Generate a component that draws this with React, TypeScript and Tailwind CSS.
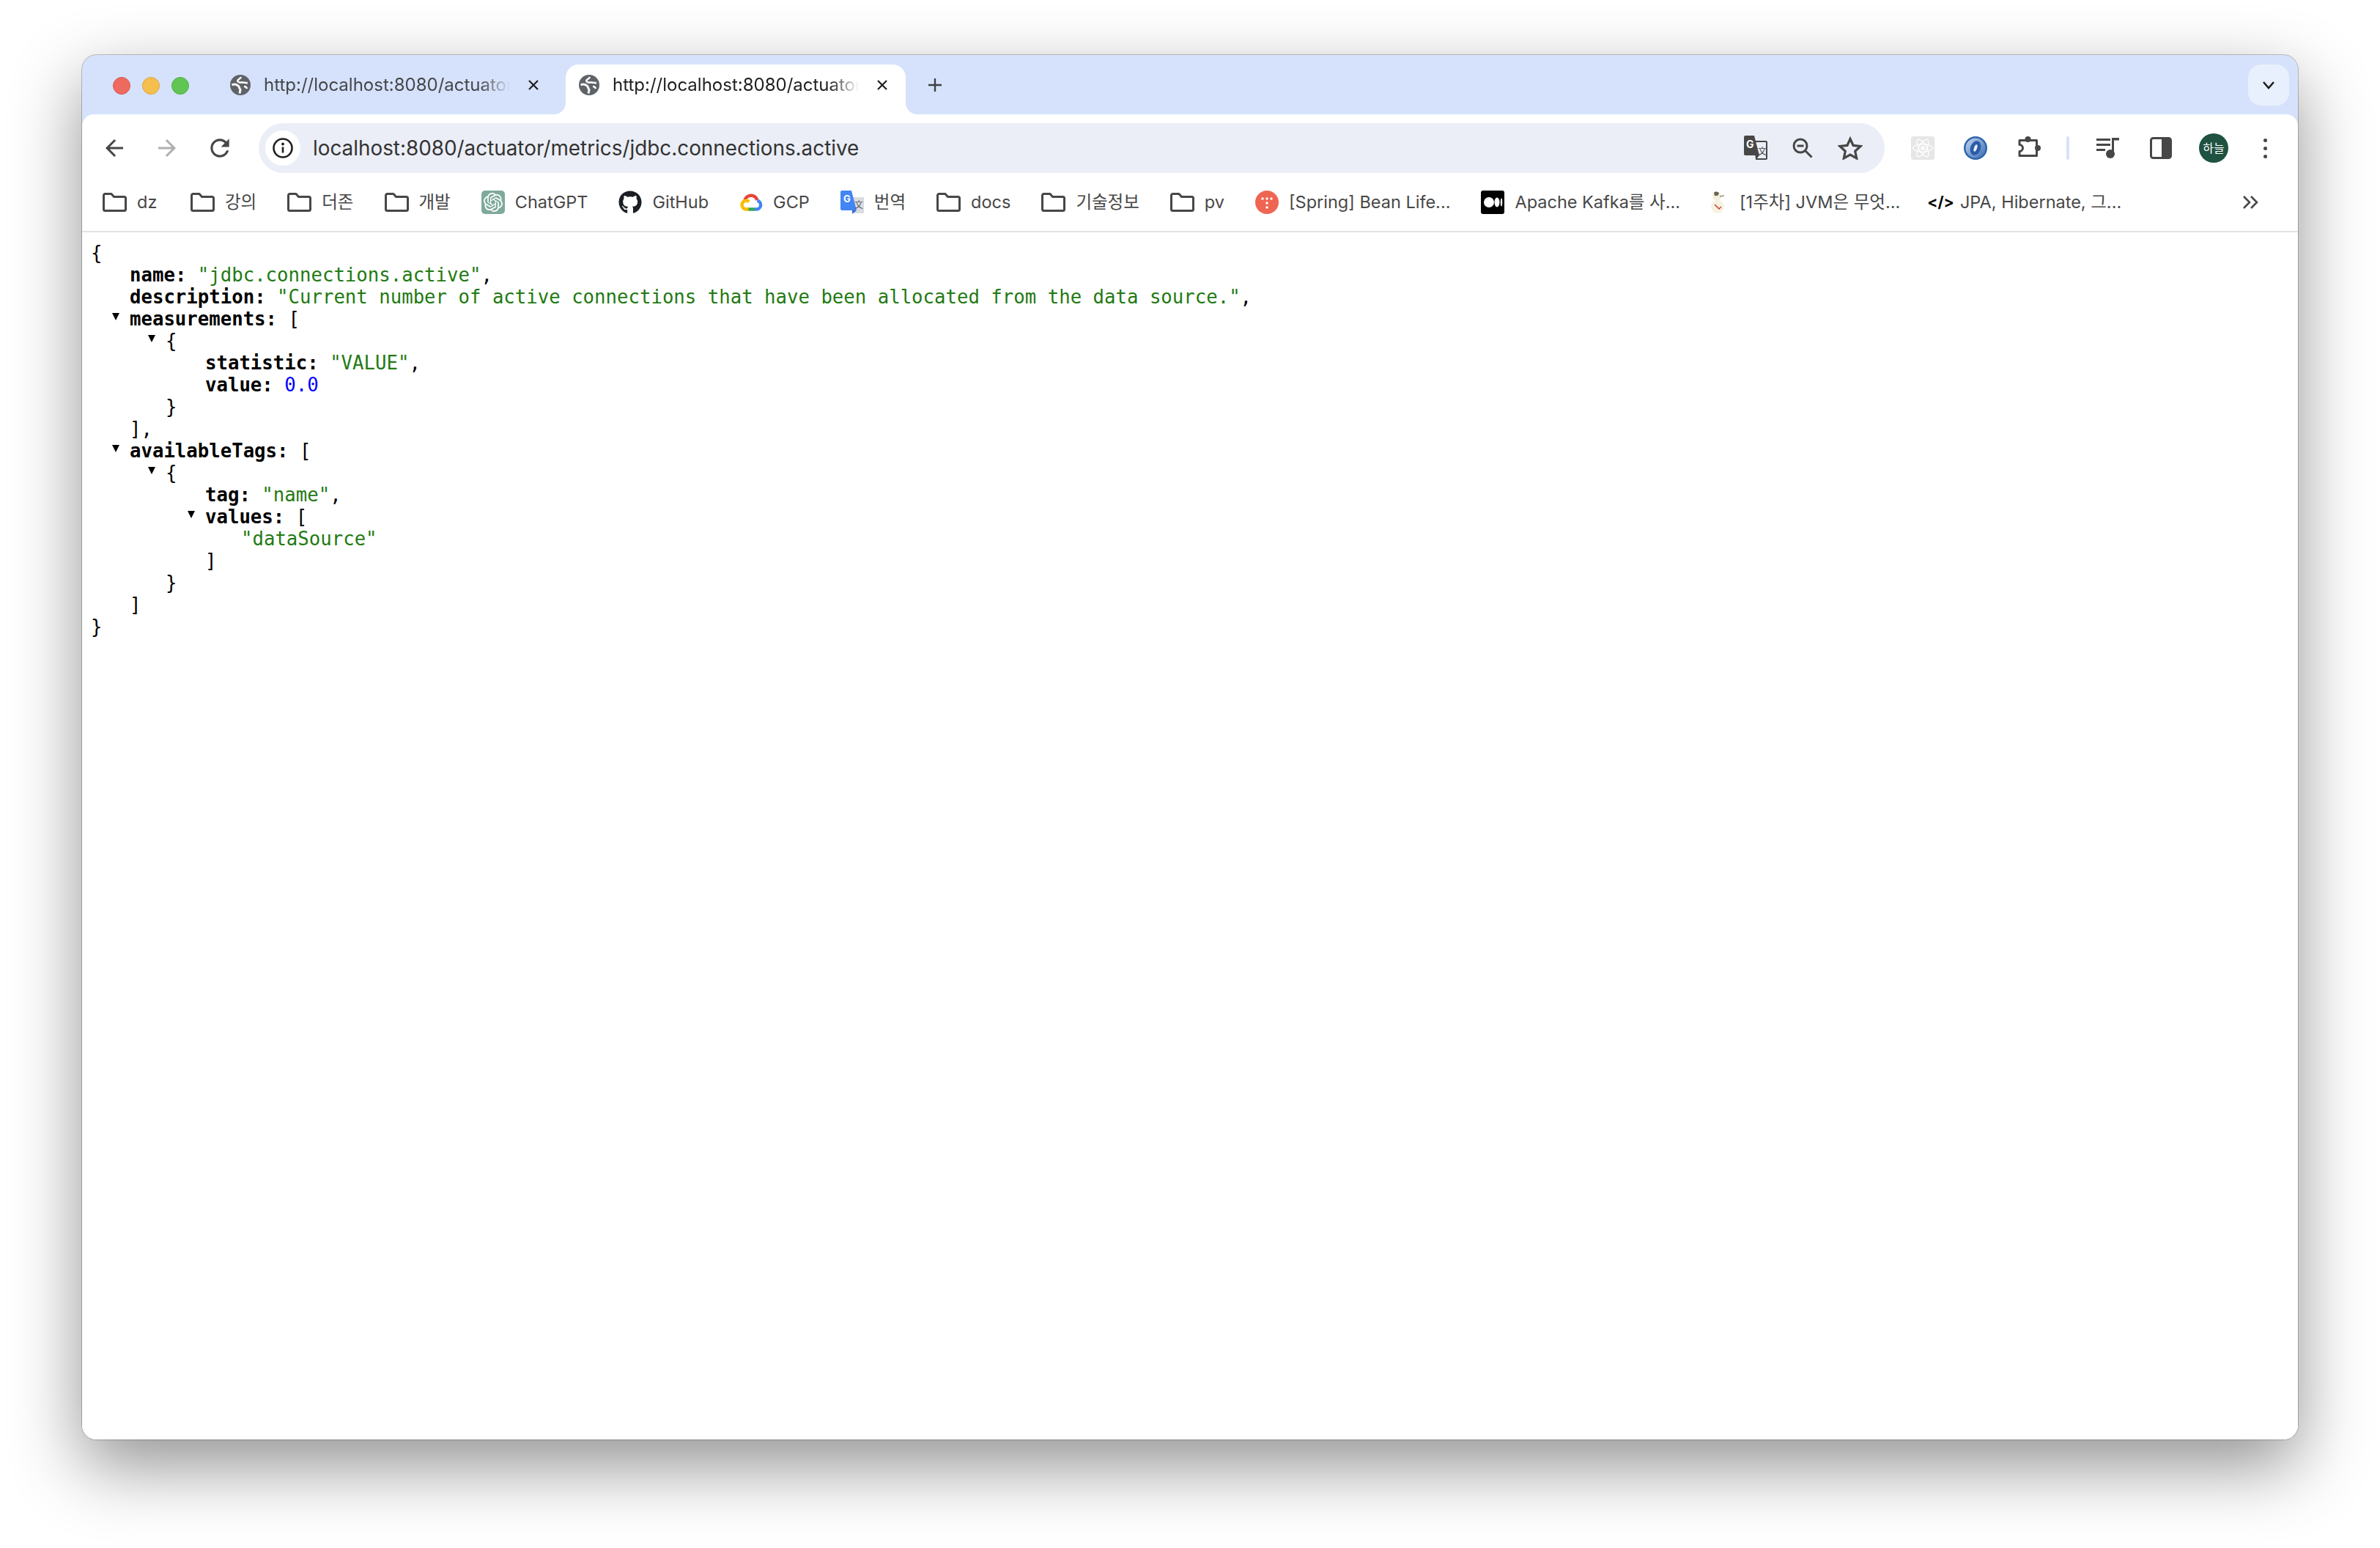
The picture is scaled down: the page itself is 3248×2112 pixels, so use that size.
import type { ReactNode } from "react";
import { FaGithub } from "react-icons/fa";
import { SiOpenai, SiReact } from "react-icons/si";

const uiFont = "font-['Inter','Noto_Sans_CJK_KR',sans-serif]";

const Globe = () => (
  <svg viewBox="0 0 28 28" className="h-[28px] w-[28px] shrink-0">
    <circle cx="14" cy="14" r="14" fill="#5f6368" />
    <path d="M2.500 14c3-1.500 6-1 8.500 1 2 1.500 1.500 4 3 5.500l-1 5" fill="none" stroke="#fff" strokeWidth="3" opacity="0.95" />
    <path d="M15 3c-1 2.500-3.500 3-4.500 4.500S12 11 15 10.500s6 1 9 .5" fill="none" stroke="#fff" strokeWidth="2.600" opacity="0.95" />
    <path d="M19 16c2 0 3.500 1 4 3" fill="none" stroke="#fff" strokeWidth="2.500" />
  </svg>
);

const Close = () => (
  <svg viewBox="0 0 20 20" className="h-[20px] w-[20px]" fill="none" stroke="#1f1f1f" strokeWidth="2.200">
    <path d="M4 4l12 12M16 4L4 16" />
  </svg>
);

const TabCurve = ({ flip }: { flip?: boolean }) => (
  <svg viewBox="0 0 16 16" className={`absolute bottom-0 h-[16px] w-[16px] ${flip ? "-right-[16px] -scale-x-100" : "-left-[16px]"}`}>
    <path d="M16 0v16H0C9 16 16 9 16 0z" fill="#fff" />
  </svg>
);

const Tab = ({ active }: { active?: boolean }) => (
  <div className={`relative flex h-[68px] w-[464px] items-center rounded-t-[18px] pb-[12px] pl-[18px] pr-[22px] ${active ? "bg-white text-[#1f1f1f]" : "text-[#45474a]"}`}>
    {active && <TabCurve />}
    {active && <TabCurve flip />}
    <Globe />
    <span className="ml-[18px] w-[336px] overflow-hidden whitespace-nowrap text-[24px] leading-[32px] [mask-image:linear-gradient(to_right,black_88%,transparent)]">
      http://localhost:8080/actuator
    </span>
    <span className="ml-auto">
      <Close />
    </span>
  </div>
);

const Dot = ({ color }: { color: string }) => <div className={`h-[24px] w-[24px] rounded-full border ${color}`} />;

const ToolButton = ({ children }: { children: ReactNode }) => (
  <div className="flex h-[68px] w-[72px] shrink-0 items-center justify-center">{children}</div>
);

const Folder = () => (
  <svg viewBox="0 0 33 26" className="h-[26px] w-[33px] shrink-0" fill="none" stroke="#474747" strokeWidth="3" strokeLinejoin="round">
    <path d="M1.500 3.500a2 2 0 0 1 2-2h8.500l3.500 4h14a2 2 0 0 1 2 2v15a2 2 0 0 1-2 2h-26a2 2 0 0 1-2-2z" />
  </svg>
);

const ChatGptIcon = () => (
  <div className="flex h-[32px] w-[32px] items-center justify-center rounded-[5px] bg-[#7fa99b]">
    <SiOpenai className="h-[26px] w-[26px] text-white" />
  </div>
);

const GcpIcon = () => (
  <svg viewBox="0 0 32 32" className="h-[32px] w-[32px]" fill="none" strokeWidth="4.500">
    <path d="M7.500 13.500a8.700 8.700 0 0 1 16.800-.5" stroke="#ea4335" />
    <path d="M21 25.500h2a5.900 5.900 0 0 0 1.300-11.700" stroke="#4285f4" />
    <path d="M11 25.500h10" stroke="#34a853" />
    <path d="M12.500 25.500h-3a5.900 5.900 0 1 1 3.800-10.400" stroke="#fbbc05" />
  </svg>
);

const TranslateFavicon = () => (
  <svg viewBox="0 0 32 32" className="h-[32px] w-[32px]">
    <path d="M16 9h15a1 1 0 0 1 1 1v20a1 1 0 0 1-1 1H18z" fill="#dadce0" />
    <path d="M2 0h13l7 27H2a2 2 0 0 1-2-2V2a2 2 0 0 1 2-2z" fill="#4285f4" />
    <path d="M16 27h6l-6 5z" fill="#3367d6" />
    <text x="4" y="16" fontSize="13" fontWeight="700" fill="#fff" fontFamily="Inter, sans-serif">G</text>
    <text x="19" y="24" fontSize="12" fill="#5f6368" fontFamily="'Noto Sans CJK KR', sans-serif">文</text>
  </svg>
);

const TistoryIcon = () => (
  <svg viewBox="0 0 32 32" className="h-[32px] w-[32px]">
    <circle cx="16" cy="16" r="16" fill="#ef6553" />
    <g fill="#fff">
      <circle cx="10" cy="11" r="1.700" />
      <circle cx="16" cy="11" r="1.700" />
      <circle cx="22" cy="11" r="1.700" />
      <circle cx="16" cy="17" r="1.700" />
      <circle cx="16" cy="23" r="1.700" />
    </g>
  </svg>
);

const MediumIcon = () => (
  <svg viewBox="0 0 32 32" className="h-[32px] w-[32px]">
    <rect width="32" height="32" rx="3" fill="#000" />
    <circle cx="11" cy="16" r="7" fill="#fff" />
    <ellipse cx="22" cy="16" rx="3.500" ry="6.500" fill="#fff" />
    <ellipse cx="28" cy="16" rx="1.200" ry="5.500" fill="#fff" />
  </svg>
);

const DogIcon = () => (
  <svg viewBox="0 0 28 32" className="-ml-[3px] h-[32px] w-[28px]">
    <ellipse cx="12" cy="22" rx="9" ry="9" fill="#f6f3e4" />
    <circle cx="11" cy="8" r="6" fill="#f4efdc" />
    <path d="M7 3c2-2 6-2 7 1l-2 3H8z" fill="#6b6254" />
    <path d="M15 8l6-1" stroke="#9a8f78" strokeWidth="1.500" />
    <path d="M8 19l6 6 3-3" fill="none" stroke="#cc3a2b" strokeWidth="1.500" />
  </svg>
);

const TranslateIcon = () => (
  <svg viewBox="0 0 32 34" className="h-[34px] w-[32px]">
    <path d="M14 8h16a1 1 0 0 1 1 1v22a1 1 0 0 1-1 1H17z" fill="none" stroke="#474747" strokeWidth="2" />
    <path d="M2 0h12l7 27H2a2 2 0 0 1-2-2V2a2 2 0 0 1 2-2z" fill="#474747" />
    <path d="M16 27h5l-4 5z" fill="#474747" />
    <text x="3" y="17" fontSize="14" fontWeight="700" fill="#fff" fontFamily="Inter, sans-serif">G</text>
    <text x="19" y="26" fontSize="12" fill="#474747" fontFamily="'Noto Sans CJK KR', sans-serif">文</text>
  </svg>
);

const ZoomOutIcon = () => (
  <svg viewBox="0 0 28 28" className="h-[28px] w-[28px]" fill="none" stroke="#474747" strokeWidth="3">
    <circle cx="11" cy="11" r="9" />
    <path d="M6.500 11h9M17.500 17.500l9 9" />
  </svg>
);

const StarIcon = () => (
  <svg viewBox="0 0 34 32" className="h-[32px] w-[34px]" fill="none" stroke="#474747" strokeWidth="3.200">
    <path d="M17 3.500l4.100 8.900 9.900 1.100-7.300 6.700 2 9.700L17 25l-8.700 4.900 2-9.700L3 13.500l9.900-1.100z" />
  </svg>
);

const RingIcon = () => (
  <svg viewBox="0 0 32 32" className="h-[32px] w-[32px]">
    <defs>
      <linearGradient id="ring" x1="0" y1="0" x2="1" y2="1">
        <stop offset="0" stopColor="#c4d6ee" />
        <stop offset="1" stopColor="#3a6db5" />
      </linearGradient>
    </defs>
    <circle cx="16" cy="16" r="16" fill="#2f64ad" />
    <circle cx="16" cy="16" r="13.500" fill="url(#ring)" />
    <ellipse cx="16" cy="16" rx="7" ry="10" fill="#2a5ca8" transform="rotate(20 16 16)" />
    <ellipse cx="16" cy="16" rx="2" ry="5" fill="#eaf1fa" transform="rotate(20 16 16)" />
  </svg>
);

const PuzzleIcon = () => (
  <svg viewBox="0 0 34 34" className="ml-[4px] h-[34px] w-[34px]">
    <path d="M3 6.500h23.500v21H3v-6a4.500 4.500 0 0 0 0-9z" fill="none" stroke="#474747" strokeWidth="3" strokeLinejoin="round" />
    <circle cx="14.500" cy="5" r="4" fill="#474747" />
    <circle cx="28" cy="17" r="4" fill="#474747" />
  </svg>
);

const QueueIcon = () => (
  <svg viewBox="0 0 32 30" className="h-[30px] w-[32px]" fill="#474747">
    <rect x="0" y="2" width="19" height="3" />
    <rect x="0" y="9" width="19" height="3" />
    <rect x="0" y="16" width="12" height="3" />
    <rect x="21" y="1" width="3" height="22" />
    <rect x="21" y="1" width="10" height="3.500" />
    <circle cx="19" cy="23" r="6" />
  </svg>
);

const PanelIcon = () => (
  <svg viewBox="0 0 30 30" className="h-[30px] w-[30px]">
    <rect x="1.500" y="1.500" width="27" height="27" rx="3" fill="#fff" stroke="#474747" strokeWidth="3" />
    <path d="M16 1.500h10a2.500 2.500 0 0 1 2.500 2.500v22a2.500 2.500 0 0 1-2.500 2.500H16z" fill="#474747" />
  </svg>
);

const Bookmark = ({ icon, label, labelClass }: { icon: ReactNode; label: string; labelClass?: string }) => (
  <div className="flex shrink-0 items-center gap-[14px]">
    {icon}
    <span className={`whitespace-nowrap text-[23.5px] leading-[32px] text-[#474747] ${labelClass ?? ""}`}>{label}</span>
  </div>
);

const bookmarks: { icon: ReactNode; label: string; labelClass?: string }[] = [
  { icon: <Folder />, label: "dz", labelClass: "min-w-[31px]" },
  { icon: <Folder />, label: "강의" },
  { icon: <Folder />, label: "더존" },
  { icon: <Folder />, label: "개발" },
  { icon: <ChatGptIcon />, label: "ChatGPT" },
  { icon: <FaGithub className="h-[32px] w-[32px] text-[#1b1f23]" />, label: "GitHub" },
  { icon: <GcpIcon />, label: "GCP" },
  { icon: <TranslateFavicon />, label: "번역" },
  { icon: <Folder />, label: "docs" },
  { icon: <Folder />, label: "기술정보" },
  { icon: <Folder />, label: "pv" },
  { icon: <TistoryIcon />, label: "[Spring] Bean Life..." },
  { icon: <MediumIcon />, label: "Apache Kafka를 사..." },
  { icon: <DogIcon />, label: "[1주차] JVM은 무엇..." },
  { icon: <span className="-ml-[5px] -mr-[6px] text-[21px] font-bold leading-[32px] text-black">&lt;/&gt;</span>, label: "JPA, Hibernate, 그..." },
];

const indents = ["pl-[12px]", "pl-[65px]", "pl-[114px]", "pl-[168px]", "pl-[217px]"];

type JsonLine = {
  depth: number;
  toggle?: boolean;
  name?: string;
  text?: string;
  str?: string;
  num?: string;
  tail?: string;
};

const lines: JsonLine[] = [
  { depth: 0, text: "{" },
  { depth: 1, name: "name", str: '"jdbc.connections.active"', tail: "," },
  { depth: 1, name: "description", str: '"Current number of active connections that have been allocated from the data source."', tail: "," },
  { depth: 1, toggle: true, name: "measurements", text: "[" },
  { depth: 2, toggle: true, text: "{" },
  { depth: 3, name: "statistic", str: '"VALUE"', tail: "," },
  { depth: 3, name: "value", num: "0.0" },
  { depth: 2, text: "}" },
  { depth: 1, text: "]," },
  { depth: 1, toggle: true, name: "availableTags", text: "[" },
  { depth: 2, toggle: true, text: "{" },
  { depth: 3, name: "tag", str: '"name"', tail: "," },
  { depth: 3, toggle: true, name: "values", text: "[" },
  { depth: 4, str: '"dataSource"' },
  { depth: 3, text: "]" },
  { depth: 2, text: "}" },
  { depth: 1, text: "]" },
  { depth: 0, text: "}" },
];

const Line = ({ line }: { line: JsonLine }) => (
  <div className={`h-[30px] whitespace-pre text-[25.7px] leading-[30px] text-black ${indents[line.depth]}`}>
    <span className="relative">
      {line.toggle && (
        <span className="absolute -left-[24px] top-[7px] h-0 w-0 border-x-[5px] border-t-[10px] border-x-transparent border-t-black" />
      )}
      {line.name && <span className="font-bold">{line.name}: </span>}
      {line.str && <span className="text-[#227a12]">{line.str}</span>}
      {line.num && <span className="text-[#0000ff]">{line.num}</span>}
      {line.text}
      {line.tail}
    </span>
  </div>
);

export default function App() {
  return (
    <div className={`h-[2112px] bg-white px-[112px] pt-[75px] ${uiFont}`}>
      <div className="flex h-[1889px] flex-col overflow-hidden rounded-[20px] bg-[#d6e2fb] shadow-[0_36px_96px_rgba(0,0,0,0.43),0_0_0_1px_rgba(0,0,0,0.22)]">
        <div className="flex h-[81px] shrink-0 items-end pl-[42px] pr-[12px]">
          <div className="mb-[27px] flex gap-[16px]">
            <Dot color="bg-[#ee6a5f] border-[#d9564c]" />
            <Dot color="bg-[#f5bf4f] border-[#dfa63c]" />
            <Dot color="bg-[#61c554] border-[#4fae43]" />
          </div>
          <div className="ml-[38px] flex gap-[12px]">
            <Tab />
            <Tab active />
          </div>
          <svg viewBox="0 0 20 20" className="mb-[30px] ml-[30px] h-[20px] w-[20px]" fill="none" stroke="#3c4043" strokeWidth="2.400">
            <path d="M10 1v18M1 10h18" />
          </svg>
          <div className="mb-[12px] ml-auto flex h-[56px] w-[56px] items-center justify-center rounded-[18px] bg-[#e9f0fd]">
            <svg viewBox="0 0 18 12" className="h-[12px] w-[18px]" fill="none" stroke="#1f1f1f" strokeWidth="2.600">
              <path d="M2 2l7 8 7-8" />
            </svg>
          </div>
        </div>

        <div className="flex min-h-0 flex-1 flex-col rounded-t-[16px] bg-white">
          <div className="flex h-[80px] shrink-0 items-center pl-[8px] pt-[12px]">
            <ToolButton>
              <svg viewBox="0 0 24 24" className="h-[36px] w-[36px]" fill="#474747">
                <path d="M20 11H7.830l5.590-5.590L12 4l-8 8 8 8 1.410-1.410L7.830 13H20v-2z" />
              </svg>
            </ToolButton>
            <ToolButton>
              <svg viewBox="0 0 24 24" className="h-[36px] w-[36px] -scale-x-100" fill="#b0b0b0">
                <path d="M20 11H7.830l5.590-5.590L12 4l-8 8 8 8 1.410-1.410L7.830 13H20v-2z" />
              </svg>
            </ToolButton>
            <ToolButton>
              <svg viewBox="0 0 24 24" className="h-[38px] w-[38px]" fill="#474747">
                <path d="M17.650 6.350C16.200 4.900 14.210 4 12 4c-4.420 0-7.990 3.580-7.990 8s3.570 8 7.990 8c3.730 0 6.840-2.550 7.730-6h-2.080c-.82 2.330-3.040 4-5.650 4-3.310 0-6-2.690-6-6s2.690-6 6-6c1.660 0 3.140.69 4.220 1.780L13 11h7V4l-2.350 2.350z" />
              </svg>
            </ToolButton>

            <div className="ml-[17px] flex h-[68px] w-[2219px] shrink-0 items-center rounded-full bg-[#ebeef6] pl-[9px] pr-[30px]">
              <div className="flex h-[48px] w-[48px] items-center justify-center rounded-full bg-white">
                <svg viewBox="0 0 28 28" className="h-[28px] w-[28px]" fill="none" stroke="#1f1f1f" strokeWidth="2.600">
                  <circle cx="14" cy="14" r="12.500" />
                  <path d="M14 12.500v8" />
                  <circle cx="14" cy="8.500" r="1.900" fill="#1f1f1f" stroke="none" />
                </svg>
              </div>
              <span className="ml-[17px] whitespace-nowrap text-[27.85px] leading-[36px] text-[#333333]">
                localhost:8080/actuator/metrics/jdbc.connections.active
              </span>
              <div className="ml-auto flex items-center gap-[34px]">
                <TranslateIcon />
                <ZoomOutIcon />
                <StarIcon />
              </div>
            </div>

            <div className="ml-[16px] flex items-center">
              <ToolButton>
                <div className="flex h-[32px] w-[32px] items-center justify-center rounded-[3px] bg-[#e6e6e6]">
                  <SiReact className="h-[28px] w-[28px] text-white" />
                </div>
              </ToolButton>
              <ToolButton>
                <RingIcon />
              </ToolButton>
              <ToolButton>
                <PuzzleIcon />
              </ToolButton>
              <div className="ml-[16px] mr-[17px] h-[32px] w-[4px] rounded-full bg-[#d6e2fb]" />
              <ToolButton>
                <QueueIcon />
              </ToolButton>
              <ToolButton>
                <PanelIcon />
              </ToolButton>
              <ToolButton>
                <div className="flex h-[40px] w-[40px] items-center justify-center rounded-full bg-[#1f5240] text-[16px] text-white">
                  하늘
                </div>
              </ToolButton>
              <ToolButton>
                <div className="mr-[3px] flex flex-col gap-[6px]">
                  <div className="h-[5px] w-[5px] rounded-full bg-[#474747]" />
                  <div className="h-[5px] w-[5px] rounded-full bg-[#474747]" />
                  <div className="h-[5px] w-[5px] rounded-full bg-[#474747]" />
                </div>
              </ToolButton>
            </div>
          </div>

          <div className="flex h-[81px] shrink-0 items-center border-b-2 border-[#e2e2e2] pl-[28px] pr-[54px]">
            <div className="flex items-center gap-[42px]">
              {bookmarks.map((b) => (
                <Bookmark key={b.label} icon={b.icon} label={b.label} labelClass={b.labelClass} />
              ))}
            </div>
            <svg viewBox="0 0 22 20" className="ml-auto h-[20px] w-[22px]" fill="none" stroke="#474747" strokeWidth="2.600">
              <path d="M2 2l8 8-8 8M12 2l8 8-8 8" />
            </svg>
          </div>

          <div className="flex-1 bg-white pt-[13px] font-['DejaVu_Sans_Mono',monospace]">
            {lines.map((line, i) => (
              <Line key={i} line={line} />
            ))}
          </div>
        </div>
      </div>
    </div>
  );
}
